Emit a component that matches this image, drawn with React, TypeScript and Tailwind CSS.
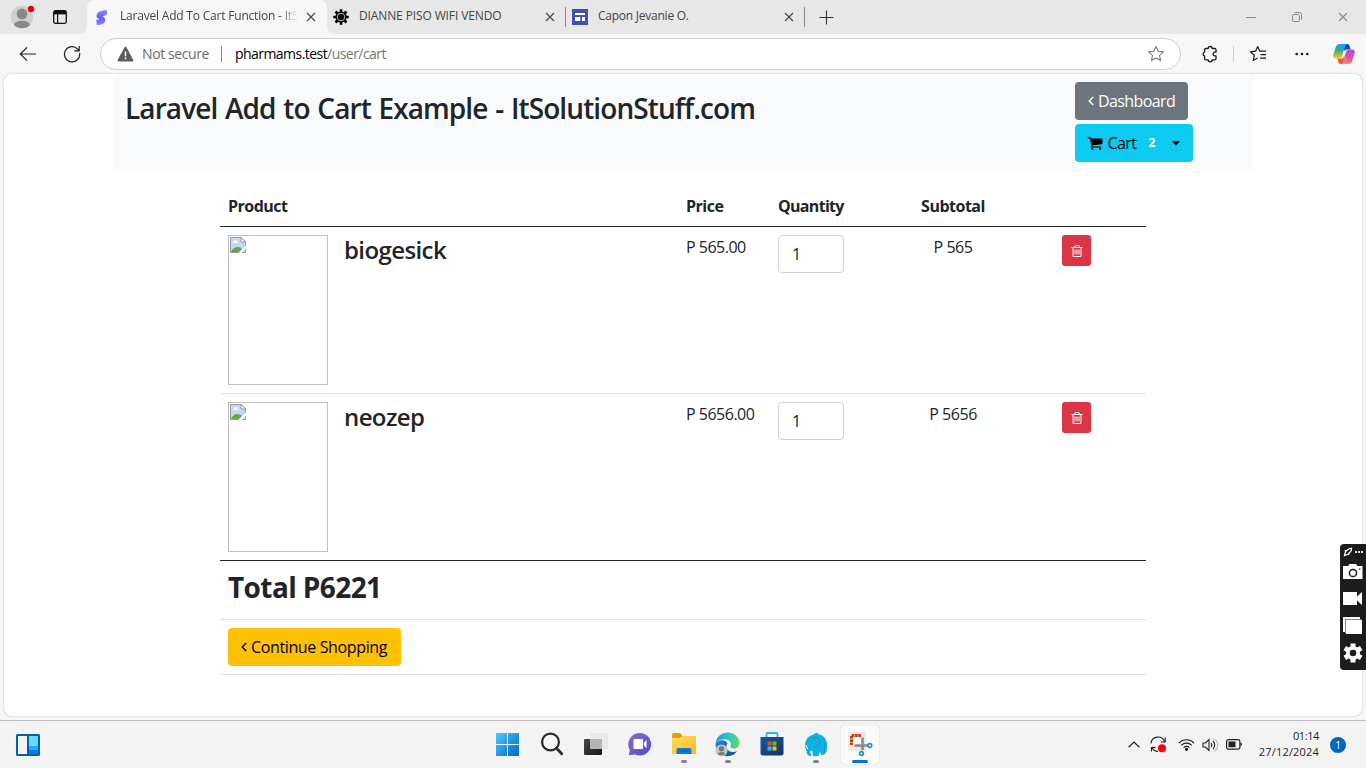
import React from "react";

const ui = "font-['Open_Sans','Noto_Sans',sans-serif]";

/* ---------- browser icons ---------- */

const Close = ({ c = "#444" }: { c?: string }) => (
  <svg width="10" height="10" viewBox="0 0 10 10" fill="none" stroke={c} strokeWidth="1.1" className="shrink-0">
    <path d="M1 1l8 8M9 1L1 9" />
  </svg>
);

const Profile = () => (
  <svg width="26" height="26" viewBox="0 0 26 26" className="shrink-0">
    <defs>
      <clipPath id="pc"><circle cx="12" cy="14" r="11.3" /></clipPath>
    </defs>
    <circle cx="12" cy="14" r="11.3" fill="#d2d0ce" />
    <g clipPath="url(#pc)" fill="#8a8886">
      <circle cx="12" cy="11" r="5.4" />
      <ellipse cx="12" cy="22.6" rx="8.3" ry="4.8" />
    </g>
    <circle cx="21" cy="6" r="3.2" fill="#e8000c" />
  </svg>
);

const Workspaces = () => (
  <svg width="14" height="14" viewBox="0 0 14 14" className="shrink-0">
    <rect x=".7" y=".7" width="12.6" height="12.6" rx="1.8" fill="none" stroke="#111" strokeWidth="1.3" />
    <path d="M1 1h12v3.400H1z" fill="#111" />
    <path d="M4.600 4v9" stroke="#111" strokeWidth="1.200" />
  </svg>
);

const SFavicon = () => (
  <svg width="13" height="17" viewBox="0 0 13 17" className="shrink-0">
    <defs>
      <linearGradient id="sg" x1="0" y1="0" x2="0" y2="1">
        <stop offset="0" stopColor="#8f8bff" />
        <stop offset=".5" stopColor="#6460f5" />
        <stop offset="1" stopColor="#8480ff" />
      </linearGradient>
    </defs>
    <path d="M10.600.8L5 2.100C2 3 .3 5 .5 7.200c.2 1.600 1.500 2.300 3.200 2.700L.3 11l.5 5 3.300-.3c3.200-.4 5.300-2.300 5.200-4.700-.1-1.700-1-2.700-2.800-3.300L11.300 5z" fill="url(#sg)" />
  </svg>
);

const GearFavicon = () => (
  <svg width="16" height="16" viewBox="0 0 16 16" className="shrink-0">
    <g stroke="#000" strokeWidth="2.700">
      <path d="M8 .3v15.400M.3 8h15.400M2.500 2.500l11 11M13.500 2.500l-11 11" />
    </g>
    <circle cx="8" cy="8" r="5.600" fill="#000" />
    <circle cx="8" cy="8" r="3.800" fill="none" stroke="#e7e7e7" strokeWidth=".8" />
  </svg>
);

const SitesFavicon = () => (
  <svg width="16" height="16" viewBox="0 0 16 16" className="shrink-0">
    <path d="M0 0h16v16H0z" fill="#3f51b5" />
    <path d="M3 4h10v2H3zM3 8h5.300v4H3zM10 8h3v4h-3z" fill="#fff" />
  </svg>
);

const Back = () => (
  <svg width="18" height="16" viewBox="0 0 18 16" fill="none" stroke="#222" strokeWidth="1.200" className="shrink-0">
    <path d="M17 8H1.500M8 1.300L1.300 8 8 14.700" />
  </svg>
);

const Reload = () => (
  <svg width="18" height="18" viewBox="0 0 18 18" fill="none" stroke="#222" strokeWidth="1.250" className="shrink-0">
    <path d="M16.600 8.200A7.600 7.600 0 1 1 14.800 4.300L16 5.500M16.200 1v4.800h-4.900" />
  </svg>
);

const Warning = () => (
  <svg width="17" height="16" viewBox="0 0 17 16" className="shrink-0">
    <path d="M8.500 1.500l7 13h-14z" fill="#5c5c5c" stroke="#5c5c5c" strokeWidth="1.800" strokeLinejoin="round" />
    <path d="M8.500 5.500v4.700M8.500 11.500v1.700" stroke="#fff" strokeWidth="1.500" />
  </svg>
);

const starPath = "M9 1.500l2.200 4.800 5.200.6-3.900 3.500 1.100 5.200L9 13l-4.600 2.600 1.100-5.200L1.600 6.900l5.200-.6z";

const Star = () => (
  <svg width="18" height="18" viewBox="0 0 18 18" fill="none" stroke="#777" strokeWidth="1.100" strokeLinejoin="round" className="shrink-0">
    <path d={starPath} />
  </svg>
);

const Puzzle = () => (
  <svg width="18" height="18" viewBox="0 0 18 18" fill="none" stroke="#1b1b1b" strokeWidth="1.300" strokeLinejoin="round" className="shrink-0">
    <path d="M4.800 3.500h2.400a2 2 0 0 1 4 0h2.600a1.200 1.200 0 0 1 1.200 1.200v2.500h-1a1.800 1.800 0 0 0 0 3.700h1v2.700a1.200 1.200 0 0 1-1.200 1.200h-2.600a2 2 0 0 1-4 0H4.800a1.200 1.200 0 0 1-1.200-1.200V11a2 2 0 0 1 0-3.900V4.700a1.200 1.200 0 0 1 1.200-1.200z" />
  </svg>
);

const Favorites = () => (
  <svg width="18" height="18" viewBox="0 0 18 18" fill="none" stroke="#1b1b1b" strokeWidth="1.200" strokeLinejoin="round" className="shrink-0">
    <path d="M10.900 6.200L8.700 1.600 6.600 6.200l-5.200.6 3.900 3.500-1.100 5.200 4.400-2.500M10.500 6.200H17M11.500 9.700H17M11 13.200h6" />
  </svg>
);

const Copilot = () => (
  <svg width="24" height="22" viewBox="0 0 24 22" className="shrink-0">
    <defs>
      <linearGradient id="c1" x1="0" y1="0" x2="0" y2="1">
        <stop offset="0" stopColor="#1ba3f2" />
        <stop offset=".4" stopColor="#24a5a5" />
        <stop offset=".75" stopColor="#a8bf35" />
        <stop offset="1" stopColor="#ffc529" />
      </linearGradient>
      <linearGradient id="c2" x1=".8" y1="0" x2=".2" y2="1">
        <stop offset="0" stopColor="#9c55ed" />
        <stop offset=".5" stopColor="#e251a0" />
        <stop offset="1" stopColor="#ff9660" />
      </linearGradient>
    </defs>
    <path d="M12 1h3.500c1 0 1.700.8 2 1.700l1.200 3.800h-4c-1.400 0-2.200.7-2.600 2z" fill="#1544c4" />
    <path d="M12 21H8.500c-1 0-1.700-.8-2-1.700L5.300 15.500h4c1.400 0 2.200-.7 2.600-2z" fill="#f3553b" />
    <path d="M7.800 1h7.400c-1.300.4-1.800 1.400-2.200 2.700L9.800 13.500c-.4 1.300-1.200 2-2.500 2H4c-2.200 0-3.300-1.400-2.700-3.600l2.500-8C4.400 2 5.700 1 7.800 1z" fill="url(#c1)" />
    <path d="M16.200 21H9c1.200-.4 1.700-1.400 2.100-2.700l3.100-9.800c.4-1.300 1.200-2 2.500-2H20c2.200 0 3.300 1.400 2.700 3.600l-2.500 8c-.6 1.900-1.900 2.900-4 2.900z" fill="url(#c2)" />
  </svg>
);

const TabTitle = ({ children, className }: { children: React.ReactNode; className: string }) => (
  <div className={`-mt-[2px] whitespace-nowrap text-[12px] leading-4 text-[#444] ${className}`}>{children}</div>
);

function TabStrip() {
  return (
    <div className="flex h-[34px] bg-[#f7f7f7]">
      <div className="flex w-[87px] shrink-0 items-center rounded-br-lg bg-[#e7e7e7] pl-[10px]">
        <div className="-mt-[2px]"><Profile /></div>
        <div className="ml-[17px]"><Workspaces /></div>
      </div>
      <div className="w-[240px] shrink-0 bg-[#e7e7e7]">
        <div className="flex h-full items-center rounded-t-lg bg-[#f7f7f7] pl-[9px]">
          <SFavicon />
          <div className="ml-[11px] w-[178px] [mask-image:linear-gradient(to_right,black_90%,transparent)]">
            <TabTitle className="tracking-[-0.2px]">Laravel Add To Cart Function - ItS</TabTitle>
          </div>
          <div className="ml-[8px]"><Close /></div>
        </div>
      </div>
      <div className="flex grow items-center rounded-bl-lg bg-[#e7e7e7] pl-[6px]">
        <GearFavicon />
        <div className="ml-[10px] w-[186px]"><TabTitle className="tracking-[-0.12px]">DIANNE PISO WIFI VENDO</TabTitle></div>
        <Close />
        <div className="ml-[10px] h-5 w-px bg-[#888]" />
        <div className="ml-[6px] flex"><SitesFavicon /></div>
        <div className="ml-[10px] w-[186px]"><TabTitle className="tracking-[-0.24px]">Capon Jevanie O.</TabTitle></div>
        <Close />
        <div className="ml-[10px] h-5 w-px bg-[#888]" />
        <svg className="ml-[14px]" width="15" height="15" viewBox="0 0 15 15" stroke="#333" strokeWidth="1.100">
          <path d="M7.500 .5v14M.5 7.500h14" />
        </svg>
        <div className="ml-auto flex items-center pr-[18px]">
          <svg width="10" height="10" viewBox="0 0 10 10" stroke="#8a8a8a"><path d="M0 5.500h10" /></svg>
          <svg className="ml-[36px]" width="10" height="10" viewBox="0 0 10 10" fill="none" stroke="#8a8a8a">
            <rect x=".5" y="2.500" width="7" height="7" rx="1.300" />
            <path d="M2.500 .500h5a2 2 0 0 1 2 2v5" />
          </svg>
          <div className="ml-[36px]"><Close c="#8a8a8a" /></div>
        </div>
      </div>
    </div>
  );
}

function Toolbar() {
  return (
    <div className="flex h-10 items-center bg-[#f7f7f7] pl-[19px]">
      <Back />
      <div className="ml-[26px]"><Reload /></div>
      <div className="ml-[19px] flex h-8 w-[1081px] items-center rounded-full border border-[#d0d0d0] bg-white pl-[16px] pr-[15px] text-[14px] leading-5">
        <Warning />
        <span className="ml-[8px] w-[68px] whitespace-nowrap tracking-[-0.4px] text-[#6b6b6b]">Not secure</span>
        <div className="ml-[11px] h-4 w-px bg-[#8a8a8a]" />
        <span className="ml-[13px] whitespace-nowrap tracking-[-0.55px] text-[#767676]"><span className="text-black">pharmams.test</span>/user/cart</span>
        <div className="ml-auto"><Star /></div>
      </div>
      <div className="ml-[20px]"><Puzzle /></div>
      <div className="ml-[14px] h-4 w-px bg-[#cfcfcf]" />
      <div className="ml-[15px]"><Favorites /></div>
      <svg className="ml-[28px]" width="14" height="4" viewBox="0 0 14 4" fill="#1b1b1b">
        <circle cx="1.700" cy="2" r="1.300" /><circle cx="7" cy="2" r="1.300" /><circle cx="12.300" cy="2" r="1.300" />
      </svg>
      <div className="ml-[23px]"><Copilot /></div>
    </div>
  );
}

/* ---------- page ---------- */

const AngleLeft = () => (
  <svg width="6" height="10" viewBox="0 0 6 10" fill="none" stroke="currentColor" strokeWidth="1.400" className="shrink-0">
    <path d="M5.200 1L1.200 5l4 4" />
  </svg>
);

const CartIcon = () => (
  <svg width="16" height="16" viewBox="0 0 1792 1792" fill="currentColor" className="shrink-0">
    <path d="M704 1536q0 52-38 90t-90 38-90-38-38-90 38-90 90-38 90 38 38 90zm896 0q0 52-38 90t-90 38-90-38-38-90 38-90 90-38 90 38 38 90zm128-1088v512q0 24-16.500 42.500t-40.500 21.500l-1044 122q13 60 13 70 0 16-24 64h920q26 0 45 19t19 45-19 45-45 19h-1024q-26 0-45-19t-19-45q0-11 8-31.500t16-36 21.500-40 15.500-29.500l-177-823h-204q-26 0-45-19t-19-45 19-45 45-19h256q16 0 28.500 6.500t19.500 15.500 13 24.500 8 26 5.500 29.500 4.500 26h1201q26 0 45 19t19 45z" />
  </svg>
);

const TrashIcon = () => (
  <svg width="14" height="14" viewBox="0 0 1792 1792" fill="#fff">
    <path d="M704 736v576q0 14-9 23t-23 9h-64q-14 0-23-9t-9-23v-576q0-14 9-23t23-9h64q14 0 23 9t9 23zm256 0v576q0 14-9 23t-23 9h-64q-14 0-23-9t-9-23v-576q0-14 9-23t23-9h64q14 0 23 9t9 23zm256 0v576q0 14-9 23t-23 9h-64q-14 0-23-9t-9-23v-576q0-14 9-23t23-9h64q14 0 23 9t9 23zm128 724v-948h-896v948q0 22 7 40.500t14.500 27 10.500 8.500h832q3 0 10.500-8.500t14.500-27 7-40.500zm-672-1076h448l-48-117q-7-9-17-11h-317q-10 2-17 11zm928 32v64q0 14-9 23t-23 9h-96v948q0 83-47 143.500t-113 60.500h-832q-66 0-113-58.500t-47-141.500v-952h-96q-14 0-23-9t-9-23v-64q0-14 9-23t23-9h309l70-167q15-37 54-63t79-26h320q40 0 79 26t54 63l70 167h309q14 0 23 9t9 23z" />
  </svg>
);

const BrokenImage = () => (
  <div className="h-[150px] w-[100px] shrink-0 border border-[#c0c0c0] p-px">
    <svg width="16" height="16" viewBox="0 0 16 16">
      <path d="M.5.5h10.800l4.200 4.200V15.500H.5z" fill="#c6d7f7" stroke="#9a9a9a" />
      <path d="M11 .500v4.500h4.500z" fill="#fff" stroke="#9a9a9a" />
      <path d="M3 6a1.300 1.300 0 0 1 1.200-1.700 1.800 1.800 0 0 1 3.300.2A1.200 1.200 0 0 1 7.700 6z" fill="#fff" />
      <path d="M1 15c1-3 3.500-5 6.500-5 2 0 3.500.8 4.500 2L9 15z" fill="#5bb038" />
      <path d="M16 8.500L8.500 16h3L16 11.500z" fill="#fff" />
    </svg>
  </div>
);

const cols = "grid grid-cols-[458px_92px_82px_202px_92px]";

const items = [
  { name: "biogesick", price: "P 565.00", subtotal: "P 565", edge: "border-[#dee2e6]" },
  { name: "neozep", price: "P 5656.00", subtotal: "P 5656", edge: "border-[#212529]" },
];

function Page() {
  return (
    <div className="mx-[4px] h-[642px] w-[1358px] rounded-lg bg-white pl-[109px] text-[16px] leading-6 text-[#212529] shadow-[0_0_2px_rgba(0,0,0,0.3)]">
      <div className="flex h-[96px] w-[1140px] items-start justify-between bg-[#f8fafc] pl-3 pr-[60px] pt-2">
        <h2 className="mt-[9px] whitespace-nowrap text-[28px] font-semibold leading-[34px] tracking-[-0.91px] [word-spacing:1.300px]">Laravel Add to Cart Example - ItSolutionStuff.com</h2>
        <div className="flex w-[118px] flex-col items-start gap-1">
          <button className="flex h-[38px] w-[113px] items-center gap-1 rounded bg-[#6c757d] pl-[13px] text-white">
            <AngleLeft />
            <span className="tracking-[-0.6px]">Dashboard</span>
          </button>
          <button className="flex h-[38px] w-[118px] items-center rounded bg-[#0dcaf0] pl-[12px] text-black">
            <CartIcon />
            <span className="ml-[4px] w-[30px] tracking-[-0.55px]">Cart</span>
            <span className="ml-[11px] w-2 text-[12px] font-bold text-white">2</span>
            <svg className="ml-[16px]" width="8" height="5" viewBox="0 0 8 5"><path d="M0 .3h8L4 4.500z" fill="#000" /></svg>
          </button>
        </div>
      </div>

      <div className="ml-[107px] mt-4 w-[926px]">
        <div className={`${cols} h-[41px] border-b border-[#212529] pt-2 font-bold tracking-[-0.5px]`}>
          <div className="pl-2">Product</div>
          <div className="pl-2">Price</div>
          <div className="pl-2 tracking-[-0.7px]">Quantity</div>
          <div className="text-center">Subtotal</div>
          <div />
        </div>
        {items.map((it) => (
          <div key={it.name} className={`${cols} h-[167px] border-b pt-2 ${it.edge}`}>
            <div className="flex pl-2">
              <BrokenImage />
              <h4 className="ml-[16px] text-[24px] font-semibold leading-[29px] tracking-[-0.6px]">{it.name}</h4>
            </div>
            <div className="whitespace-nowrap pl-2 tracking-[-0.5px]">{it.price}</div>
            <div className="pl-2">
              <input readOnly value="1" className="h-[38px] w-[66px] rounded border border-[#ced4da] bg-white px-[13px] text-[#212529] outline-none" />
            </div>
            <div className="text-center tracking-[-0.45px]">{it.subtotal}</div>
            <div className="pl-2">
              <button className="flex h-[31px] w-[29px] items-center justify-center rounded-[3px] bg-[#dc3545]"><TrashIcon /></button>
            </div>
          </div>
        ))}
        <div className="h-[59px] border-b border-[#dee2e6] pl-2 pt-[9px]">
          <h3 className="text-[28px] font-bold leading-[34px] tracking-[-0.6px]">Total P6221</h3>
        </div>
        <div className="h-[55px] border-b border-[#dee2e6] pl-2 pt-2">
          <button className="flex h-[38px] w-[173px] items-center gap-1 rounded bg-[#ffc107] pl-[13px] text-black">
            <AngleLeft />
            <span className="whitespace-nowrap tracking-[-0.37px]">Continue Shopping</span>
          </button>
        </div>
      </div>
    </div>
  );
}

/* ---------- floating recorder ---------- */

function Recorder() {
  return (
    <div className="absolute right-0 top-[544px] h-[126px] w-[26px] rounded-l bg-[#1c1c1c]">
      <svg width="26" height="126" viewBox="0 0 26 126" fill="#fff">
        <g stroke="#fff" fill="none" strokeWidth="1.200">
          <path d="M4.500 11.500l1-4L9 4.700l2.500-.4-.3 2.500L8.500 10zM4.500 6.500H7M8.800 11V8.500" />
        </g>
        <path d="M15 7h2v2h-2zM18 7h2v2h-2zM21 7h2v2h-2z" fill="#ddd" />
        <path d="M3 22h5l1.500-2h6.500l1.500 2h5v13H3z" />
        <circle cx="13" cy="29" r="3.600" fill="#fff" stroke="#1c1c1c" strokeWidth="1.500" />
        <circle cx="19.800" cy="25" r=".8" fill="#1c1c1c" />
        <path d="M3 48h14v4.500l5-4.500v13l-5-4.500V61H3z" />
        <path d="M3 73h17v2H5v13H3z" />
        <path d="M6 76h16v14H6z" />
        <path d="M5.500 89V75.500H21" fill="none" stroke="#8a8a8a" />
        <g stroke="#fff" strokeWidth="5">
          <path d="M13 99.500v19M4.800 104.200l16.400 9.600M4.800 113.800l16.400-9.600" />
        </g>
        <circle cx="13" cy="109" r="7" />
        <circle cx="13" cy="109" r="3.300" fill="#1c1c1c" />
      </svg>
    </div>
  );
}

/* ---------- taskbar ---------- */

const Widgets = () => (
  <svg width="24" height="22" viewBox="0 0 24 22">
    <rect width="24" height="22" rx="1.500" fill="#0a5cad" />
    <path d="M2 2h9v18H2z" fill="#f3f3f3" />
    <path d="M13 2h9v10h-9z" fill="#6bd8ff" />
    <path d="M13 12h9v4h-9z" fill="#27aaf2" />
    <path d="M13 16h9v4h-9z" fill="#0a7be0" />
  </svg>
);

const Start = () => (
  <svg width="23" height="23" viewBox="0 0 23 23">
    <defs>
      <linearGradient id="w" x1="0" y1="0" x2="1" y2="1">
        <stop offset="0" stopColor="#4ccbf8" /><stop offset="1" stopColor="#0067cc" />
      </linearGradient>
    </defs>
    <path d="M0 0h11v11H0zM12 0h11v11H12zM0 12h11v11H0zM12 12h11v11H12z" fill="url(#w)" />
  </svg>
);

const Search = () => (
  <svg width="24" height="24" viewBox="0 0 24 24" fill="none" stroke="#2b2b2b">
    <circle cx="10.500" cy="10" r="8.400" strokeWidth="2.200" fill="#f7f7f7" />
    <path d="M16.500 16.300l5.200 5.400" strokeWidth="2.800" strokeLinecap="round" />
  </svg>
);

const TaskView = () => (
  <svg width="24" height="22" viewBox="0 0 24 22">
    <defs>
      <linearGradient id="tv" x1="0" y1="0" x2="1" y2="1"><stop offset="0" stopColor="#484848" /><stop offset="1" stopColor="#161616" /></linearGradient>
    </defs>
    <rect x="0" y="6" width="18" height="16" rx="1" fill="url(#tv)" />
    <rect x="6" y="0" width="18" height="16" rx="1" fill="#e9e9e9" />
    <path d="M6 6h12v10H6z" fill="#b4b4b4" />
  </svg>
);

const Chat = () => (
  <svg width="24" height="23" viewBox="0 0 24 23">
    <defs>
      <linearGradient id="ch" x1="0" y1="0" x2="1" y2="1"><stop offset="0" stopColor="#8a6fc4" /><stop offset="1" stopColor="#4a4fcc" /></linearGradient>
    </defs>
    <path d="M12 0a11.300 11.300 0 1 1-5 21.500L.800 22.300 1.800 17A11.300 11.300 0 0 1 12 0z" fill="url(#ch)" />
    <rect x="5.500" y="6" width="9.500" height="10" rx="1" fill="#fff" />
    <path d="M16 9.500L18.500 7v8L16 12.700z" fill="#fff" />
  </svg>
);

const Folder = () => (
  <svg width="24" height="22" viewBox="0 0 24 22">
    <defs>
      <linearGradient id="fo" x1="0" y1="0" x2="1" y2="1"><stop offset="0" stopColor="#ffdc62" /><stop offset="1" stopColor="#fcbb1e" /></linearGradient>
    </defs>
    <path d="M0 1.500Q0 0 1.500 0H8l2.500 3H22v4H0z" fill="#e0a10b" />
    <path d="M0 5h7.500L11 3h12q1 0 1 1v16.500q0 .5-.5.500H.5Q0 21 0 20.500z" fill="url(#fo)" />
    <path d="M4.500 21v-4.500q0-1.500 1.500-1.500h12q1.500 0 1.500 1.500V21z" fill="#0f7bd0" />
    <path d="M8.500 18h7" stroke="#075a9e" />
  </svg>
);

const Edge = () => (
  <svg width="25" height="25" viewBox="0 0 25 25">
    <defs>
      <linearGradient id="e1" x1="0" y1=".3" x2="1" y2=".4"><stop offset="0" stopColor="#1e9ae0" /><stop offset=".5" stopColor="#2cc3d5" /><stop offset="1" stopColor="#62da55" /></linearGradient>
      <linearGradient id="e2" x1="0" y1="0" x2="1" y2="1"><stop offset="0" stopColor="#1b87d6" /><stop offset="1" stopColor="#0b4f9e" /></linearGradient>
    </defs>
    <path d="M.500 12C.500 16 3 22.500 10 24c5.500 1 10-1.500 12-5-3 1.500-8 1.300-10-2-1.200-2-.8-4 .5-5.500C10 7 3 7.500.500 12z" fill="url(#e2)" />
    <path d="M.5 12C1 5.500 6 .5 12.500.5c7 0 12 5 12 10.500 0 3.500-2.500 5.500-6 5.500-2 0-3.700-.7-3.200-1.700 1.800-2.300.2-7.600-5.800-7.600C5.500 7.200 2 9 .5 12z" fill="url(#e1)" />
    <circle cx="6.500" cy="18.500" r="6" fill="#c8c6c4" />
    <circle cx="6.500" cy="16.800" r="2.700" fill="#7a7876" />
    <path d="M2.600 22a4 2.500 0 0 1 7.800 0q-3.900 2.700-7.800 0z" fill="#7a7876" />
  </svg>
);

const Store = () => (
  <svg width="24" height="24" viewBox="0 0 24 24">
    <defs>
      <linearGradient id="st" x1="0" y1="0" x2="1" y2="1"><stop offset="0" stopColor="#15599f" /><stop offset="1" stopColor="#15345f" /></linearGradient>
    </defs>
    <path d="M6.500 6V2q0-1 1-1h9q1 0 1 1v4" fill="none" stroke="#2fb5ef" strokeWidth="1.800" />
    <path d="M.500 5h23v16.500q0 2-2 2h-19q-2 0-2-2z" fill="url(#st)" />
    <path d="M7.500 9.500h4v4h-4z" fill="#f25022" /><path d="M12.500 9.500h4v4h-4z" fill="#7fba00" />
    <path d="M7.500 14.500h4v4h-4z" fill="#35b6f0" /><path d="M12.500 14.500h4v4h-4z" fill="#ffb900" />
  </svg>
);

const Elephant = () => (
  <svg width="24" height="25" viewBox="0 0 24 25">
    <path d="M4 5.500C6 3.500 8 3 9.500 2.500L12.500.5l2.500 2C20 3.500 23.300 8 23.300 13.500c0 3.500-.8 6.500-2.800 9l-3.500.5-1-3.500-1.500 4.500-5.500.3-.7-5.800-2 .5.200 2.500 1.500 1-1.500 1.500c-2.500 0-4-2-4-5L1 14.500C1 11 1.500 8 4 5.500z" fill="#10b0e2" />
    <path d="M8 6c4-1.200 7 0 7.500 2.500.5 4-1.500 6.500-4.500 6.500" fill="none" stroke="#0a93c9" strokeWidth=".8" />
    <path d="M20.500 10v11" fill="none" stroke="#0a93c9" strokeWidth=".8" />
    <path d="M1.800 13l2 4" stroke="#fff" strokeWidth="1" />
  </svg>
);

const Snip = () => (
  <svg width="26" height="26" viewBox="0 0 26 26">
    <rect x="0" y="1" width="18" height="19" rx="1" fill="#e9e9e9" />
    <path d="M5 6h9v9H5z" fill="#fff" />
    <path d="M13 4.500H3.500V14" fill="none" stroke="#d83b01" strokeWidth="3" strokeDasharray="2.700 .6" />
    <path d="M6.500 14.500H21M14.500 6.500V19" stroke="#8a8a8a" strokeWidth="2.600" fill="none" />
    <circle cx="21.800" cy="14.500" r="1.900" fill="#fff" stroke="#168fd6" strokeWidth="1.600" />
    <circle cx="13.500" cy="22.500" r="1.900" fill="#fff" stroke="#168fd6" strokeWidth="1.600" />
  </svg>
);

const apps = [
  { id: "start", icon: <Start />, dot: false },
  { id: "search", icon: <Search />, dot: false },
  { id: "taskview", icon: <TaskView />, dot: false },
  { id: "chat", icon: <Chat />, dot: false },
  { id: "folder", icon: <Folder />, dot: true },
  { id: "edge", icon: <Edge />, dot: true },
  { id: "store", icon: <Store />, dot: false },
  { id: "elephant", icon: <Elephant />, dot: true },
];

function Taskbar() {
  return (
    <div className="mt-[4px] flex h-[48px] border-t border-[#bdbdbd] bg-[#f3f3f3]">
      <div className="flex w-[485.500px] items-center pl-4"><Widgets /></div>
      {apps.map((a) => (
        <div key={a.id} className="flex w-[44px] flex-col items-center">
          <div className="flex h-[39px] items-center pt-[7px]">{a.icon}</div>
          {a.dot && <div className="h-[3px] w-[6px] rounded-full bg-[#858585]" />}
        </div>
      ))}
      <div className="ml-[3px] mt-[4px] flex h-[39px] w-[38px] flex-col items-center rounded bg-[#fbfbfb] shadow-[0_0_1px_rgba(0,0,0,0.25)]">
        <div className="flex h-[35px] items-center pl-[2px] pt-[3px]"><Snip /></div>
        <div className="h-[3px] w-4 rounded-full bg-[#0a74d1]" />
      </div>
      <div className="ml-auto flex items-center pr-5">
        <svg width="12" height="7" viewBox="0 0 12 7" fill="none" stroke="#222" strokeWidth="1.200"><path d="M.6 6.300L6 1l5.400 5.300" /></svg>
        <svg className="ml-[10px]" width="17" height="17" viewBox="0 0 17 17" fill="none" stroke="#222" strokeWidth="1.100">
          <path d="M1 7.500A7 7 0 0 1 14.500 5.500M15.200 1.500V6H11M1.500 15.500V11.500H5.500M2 12a8 8 0 0 0 6 3.500" />
          <circle cx="12" cy="12.300" r="4" fill="#f00" stroke="none" />
        </svg>
        <svg className="ml-[11px]" width="17" height="13" viewBox="0 0 17 13" fill="none" stroke="#222" strokeWidth="1.100">
          <path d="M.8 5a10.800 10.800 0 0 1 15.400 0M3.200 7.300a7.500 7.500 0 0 1 10.600 0M5.600 9.600a4.100 4.100 0 0 1 5.800 0" />
          <circle cx="8.500" cy="11.300" r="1.100" fill="#222" />
        </svg>
        <svg className="ml-[7px]" width="17" height="14" viewBox="0 0 17 14" fill="none" stroke="#222" strokeWidth="1.100">
          <path d="M1 5h2.500L7 1.500v11L3.500 9H1z" />
          <path d="M9 5a3 3 0 0 1 0 4M11 3a5.500 5.500 0 0 1 0 8" />
          <path d="M13 1a8 8 0 0 1 0 12" stroke="#bbb" />
        </svg>
        <svg className="ml-[7px]" width="17" height="11" viewBox="0 0 17 11">
          <rect x=".6" y=".6" width="13.300" height="9.500" rx="1.800" fill="none" stroke="#222" strokeWidth="1.200" />
          <rect x="2.500" y="2.500" width="7" height="5.700" fill="#222" />
          <path d="M14.500 3.500q1.500 0 1.500 1.800t-1.500 1.800z" fill="#222" />
        </svg>
        <div className="-mt-px ml-[14px] w-[62px] whitespace-nowrap text-right text-[11px] leading-4 text-[#222]">
          <div className="tracking-[-0.4px]">01:14</div>
          <div className="tracking-[0.18px]">27/12/2024</div>
        </div>
        <div className="ml-[11px] flex h-4 w-4 items-center justify-center rounded-full bg-[#0067c0] text-[10px] leading-none text-white">1</div>
      </div>
    </div>
  );
}

export default function App() {
  return (
    <div className={`relative h-[768px] w-[1366px] overflow-hidden bg-[#f7f7f7] ${ui}`}>
      <TabStrip />
      <Toolbar />
      <Page />
      <Recorder />
      <Taskbar />
    </div>
  );
}
